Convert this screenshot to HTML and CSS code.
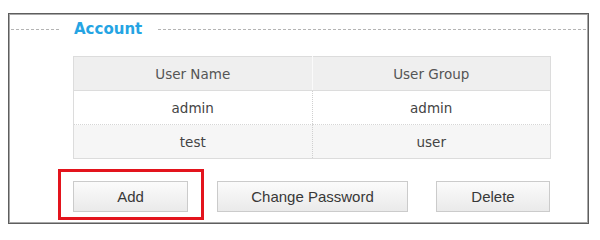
FILE: index.html
```html
<!DOCTYPE html>
<html>
<head>
<meta charset="utf-8">
<link rel="stylesheet" href="styles.css">
</head>
<body>
<div class="frame">
  <div class="legend">
    <span class="dash dash-left"></span>
    <span class="legend-title">Account</span>
    <span class="dash dash-right"></span>
  </div>
  <table class="users">
    <thead>
      <tr><th>User Name</th><th>User Group</th></tr>
    </thead>
    <tbody>
      <tr class="odd"><td>admin</td><td>admin</td></tr>
      <tr class="even"><td>test</td><td>user</td></tr>
    </tbody>
  </table>
  <div class="actions">
    <button class="btn btn-add">Add</button>
    <button class="btn btn-change">Change Password</button>
    <button class="btn btn-delete">Delete</button>
  </div>
</div>
</body>
</html>
```
FILE: styles.css
```css
html, body {
  margin: 0;
  padding: 0;
  background: #ffffff;
}
body {
  width: 600px;
  height: 234px;
  overflow: hidden;
}
.frame {
  box-sizing: border-box;
  margin: 13px 0 0 8px;
  width: 581px;
  height: 211px;
  border: 1px solid #5e5e5e;
  box-shadow: inset 0 0 0 1px #a8a8a8;
  padding: 1px;
}
.legend {
  display: flex;
  align-items: center;
  height: 28px;
  margin-left: 1px;
  margin-right: 1px;
}
.dash {
  display: block;
  height: 0;
  border-top: 1px dashed #b4b4b4;
}
.dash-left {
  width: 48px;
}
.dash-right {
  flex: 1;
}
.legend-title {
  font-family: "DejaVu Sans", Verdana, sans-serif;
  font-weight: bold;
  font-size: 15px;
  color: #25a4e3;
  margin: 0 16px 0 15px;
  line-height: 28px;
}
.users {
  border-collapse: collapse;
  margin: 13px 0 0 63px;
  width: 478px;
  table-layout: fixed;
  font-family: "DejaVu Sans", Verdana, sans-serif;
  font-size: 13.5px;
  border: 1px solid #dcdcdc;
}
.users th, .users td {
  height: 33px;
  padding: 0;
  text-align: center;
  font-weight: normal;
}
.users th {
  background: #efefef;
  color: #555555;
  border-bottom: 1px solid #dcdcdc;
  border-left: 1px solid #fafafa;
}
.users th:first-child {
  border-left: none;
}
.users td {
  color: #444444;
  border-left: 1px dotted #d0d0d0;
}
.users td:first-child {
  border-left: none;
}
.users tr.odd td {
  background: #ffffff;
  border-bottom: 1px dotted #d6d6d6;
}
.users tr.even td {
  background: #f6f6f6;
}
.actions {
  display: flex;
  margin: 22px 0 0 63px;
}
.btn {
  position: relative;
  box-sizing: border-box;
  height: 31px;
  padding: 0;
  border: 1px solid #cbcbcb;
  background: linear-gradient(#fbfbfb, #eaeaea);
  font-family: "Liberation Sans", Arial, sans-serif;
  font-size: 15px;
  color: #383838;
}
.btn-add {
  width: 115px;
}
.btn-change {
  width: 191px;
  margin-left: 29px;
}
.btn-delete {
  width: 114px;
  margin-left: 28px;
}
.btn-add::after {
  content: "";
  position: absolute;
  top: -13px;
  left: -16px;
  right: -17px;
  bottom: -9px;
  border: 3px solid #e3141d;
  pointer-events: none;
}
```
